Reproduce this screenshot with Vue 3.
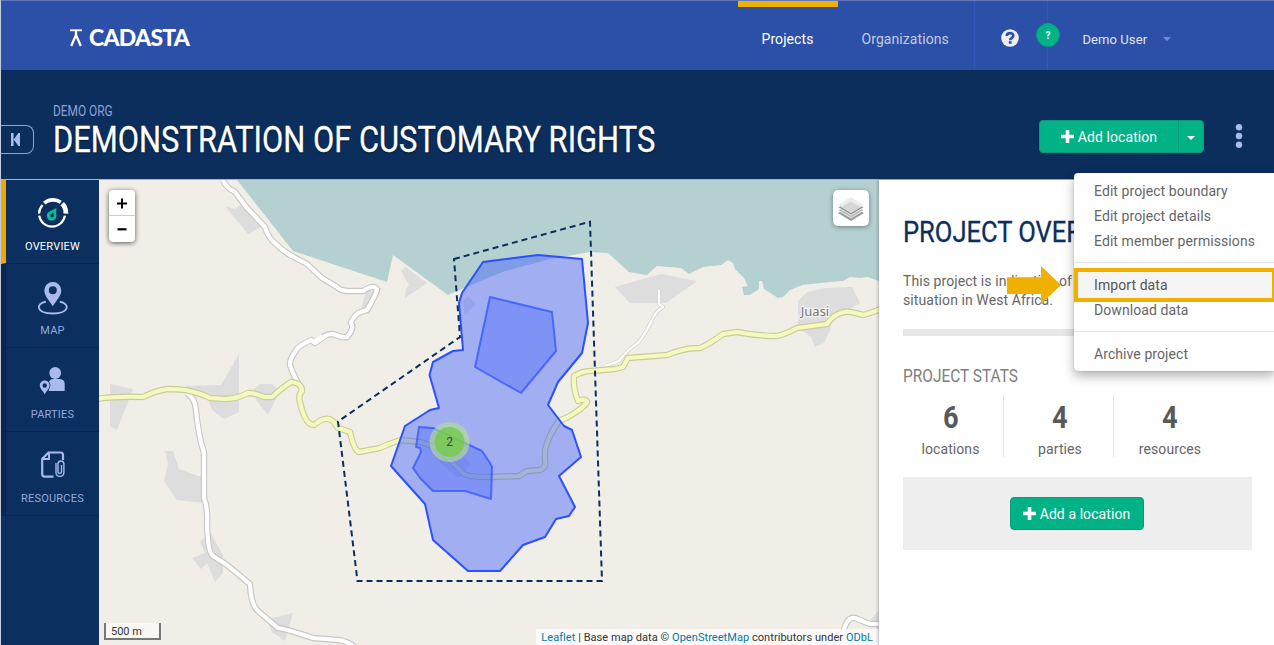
<script setup>
const navItems = [
  { label: 'Overview', icon: 'overview', active: true },
  { label: 'Map', icon: 'map' },
  { label: 'Parties', icon: 'parties' },
  { label: 'Resources', icon: 'resources' },
]
const stats = [
  { value: 6, label: 'locations' },
  { value: 4, label: 'parties' },
  { value: 4, label: 'resources' },
]
const menuGroups = [
  ['Edit project boundary', 'Edit project details', 'Edit member permissions'],
  ['Import data', 'Download data'],
  ['Archive project'],
]
const builtUp = [
  '225,206 235,209 240,205 250,216 261,227 248,234',
  '401,271 406,267 427,283 405,298 406,289 409,285',
  '367,288 382,288 369,314 360,313',
  '110,384 133,389 117,430 110,426',
  '185,386 221,385 239,354 239,412 224,419 212,410 208,400 195,396',
  '253,390 260,384 272,384 280,391 268,415 256,400',
  '165,451 173,451 179,469 204,478 204,503 177,500 164,481 168,464',
  '210,532 223,555 223,573 215,582 207,563 201,569 192,558 205,553 200,542',
  '267,619 293,613 285,641 272,632',
  '615,287 661,274 697,281 666,303 630,303',
  '798,301 807,292 825,288 852,287 860,303 832,318 830,330 824,343 815,347 811,337 798,328',
  '463,301 468,296 476,304 465,315',
  '437,460 460,452 471,464 458,478',
  '879,610 871,619 879,632',
]
const whiteRoads = [
  'M223 180Q226 188 235 192L247 208L265 227Q268 238 276 244Q284 252 292 256L307 264L322 278L337 287Q340 291 349 291L363 291Q373 284 377 289Q377 293 367 310L358 313Q350 321 351 323Q355 328 347 337Q342 338 333 334Q326 334 322 338L315 343L311 340Q299 346 297 349Q289 360 290 365Q292 372 299 385',
  'M187 393Q195 398 196 410Q198 434 204 453L204 498Q208 508 207 525Q208 553 213 556L227 565L250 584Q251 605 258 611L278 628Q286 629 313 638L338 640Q347 641 355 647',
  'M827 647Q835 637 843 633Q847 616 855 618L870 624L881 624',
]
const thinRoad = 'M605 366L619 361Q627 350 638 343Q645 335 654 316Q658 310 663 307L659 304L659 290'
const mainRoad =
  'M97 399Q116 396 143 397Q155 391 167 389Q180 389 190 391Q200 393 210 398L225 399Q236 399 248 393Q256 393 264 397L272 397Q283 387 291 382Q302 383 302 391Q298 395 300 402Q305 425 314 425Q326 415 333 421L338 428L350 432Q354 450 359 452L380 448Q390 443 401 440L420 442Q441 447 452 462L464 474Q468 477 490 477L519 476L527 471L540 470Q547 467 545 461L545 450Q549 434 559 421L568 417Q584 408 587 402Q586 398 578 401Q573 388 574 376Q583 371 591 371L615 369L623 367L628 358L667 355Q680 350 690 348.5L700 348Q708 345 723 334L737 332Q757 336 777 336Q786 334 797 328L827 324Q834 313 847 311.5Q857 313 863 315Q871 313 881 309'
</script>

<template>
  <div class="page">
    <header class="topbar">
      <div class="logo">
        <svg class="logo-mark" width="14" height="18" viewBox="0 0 14 18"><path d="M1 1.3H13" stroke="#fff" stroke-width="1.8" /><path d="M2.2 17L7 6L11.8 17M7 1V9" fill="none" stroke="#fff" stroke-width="2.3" /></svg>
        <span class="logo-text">CADASTA</span>
      </div>
      <nav class="topnav">
        <a class="current">Projects</a>
        <a>Organizations</a>
      </nav>
      <div class="help">
        <svg width="18" height="18" viewBox="0 0 18 18">
          <circle cx="9" cy="9" r="8.8" fill="#eeeef2" />
          <path d="M5.7 7C5.9 3.2 12.3 3.2 12.3 6.8C12.3 9 9.2 8.6 9.2 11.2" fill="none" stroke="#2c4fa7" stroke-width="2.6" />
          <rect x="7.8" y="12.2" width="2.8" height="2.5" fill="#2c4fa7" />
        </svg>
        <span class="badge">?</span>
      </div>
      <div class="user"><span>Demo User</span><i class="caret"></i></div>
    </header>

    <section class="titlebar">
      <button class="collapse">
        <svg width="10" height="13" viewBox="0 0 10 13"><path d="M0 0H2.6V13H0ZM9 0V13H7.4L2.7 6.5L7.4 0Z" fill="#a9bbec" /></svg>
      </button>
      <div class="heading">
        <div class="org">DEMO ORG</div>
        <h1>DEMONSTRATION OF CUSTOMARY RIGHTS</h1>
      </div>
      <div class="actions">
        <div class="split">
          <button class="green main"><svg width="13" height="13" viewBox="0 0 13 13"><path d="M4.7 0H8.3V4.7H13V8.3H8.3V13H4.7V8.3H0V4.7H4.7Z" fill="#fff" /></svg><span>Add location</span></button>
          <button class="green drop"><i class="caret white"></i></button>
        </div>
        <svg class="dots" width="8" height="24" viewBox="0 0 8 24"><circle v-for="y in [3.3, 12, 20.7]" :key="y" cx="4" :cy="y" r="3.2" fill="#a9bbec" /></svg>
      </div>
    </section>

    <main class="content">
      <aside class="sidebar">
        <div v-for="n in navItems" :key="n.label" class="side-item" :class="{ active: n.active }">
          <svg v-if="n.icon === 'overview'" width="34" height="34" viewBox="0 0 34 34">
            <g fill="none" stroke="#fff">
              <path d="M3.2 18.6A13 13 0 0 0 28.9 18.6" stroke-width="2.2" />
              <path d="M3 16.6A13 13 0 0 1 6.6 8" stroke-width="2.2" />
              <path d="M8.2 6.2A13.6 13.6 0 0 1 24.8 5.2" stroke-width="3.6" />
              <path d="M26.2 6.6A13.6 13.6 0 0 1 29.9 16.6" stroke-width="4.8" />
            </g>
            <path d="M20.4 11L13.6 14.6A4.7 4.7 0 1 0 20.3 19Z" fill="#14b898" />
            <path d="M17.2 15.2L15 17.5A1.7 1.7 0 1 0 17.8 18.5Z" fill="#0b2f5f" />
          </svg>
          <svg v-else-if="n.icon === 'map'" width="34" height="34" viewBox=".7 -.5 34 34">
            <path d="M10.5 20.3C0 22 .5 31.8 17.5 32C34.5 31.8 35 22 24.5 20.3" fill="none" stroke="#a9bbec" stroke-width="1.9" />
            <path fill-rule="evenodd" d="M17.5 24.8C15 20.5 9 14.5 9 9A8.5 8.5 0 0 1 26 9C26 14.5 20 20.5 17.5 24.8ZM17.5 4.8A4 4 0 1 0 17.5 12.8A4 4 0 1 0 17.5 4.8Z" fill="#a9bbec" />
          </svg>
          <svg v-else-if="n.icon === 'parties'" width="34" height="34" viewBox=".3 1 34 34">
            <circle cx="19.5" cy="9" r="5.9" fill="#a9bbec" />
            <path d="M13 27V20Q13 15 18 15H23Q29 15 29 20V27Z" fill="#a9bbec" />
            <path fill-rule="evenodd" d="M9 30.5C7.2 26.5 4 24.5 4 21.5A5 5 0 0 1 14 21.5C14 24.5 10.8 26.5 9 30.5ZM9 19.3A2.2 2.2 0 1 0 9 23.7A2.2 2.2 0 1 0 9 19.3Z" fill="#a9bbec" stroke="#0b2f5f" stroke-width="1.5" paint-order="stroke" />
          </svg>
          <svg v-else width="34" height="34" viewBox=".5 1 34 34" fill="none" stroke="#a9bbec">
            <path d="M27.5 12V7Q27.5 4.5 25 4.5H13L6.7 11V26Q6.7 28.6 9.2 28.6H18" stroke-width="2.2" />
            <path d="M13.5 5V11H7.5" stroke-width="1.9" />
            <path d="M20.5 15V25A4 4 0 0 0 28.4 25V15.5A3 3 0 0 0 22.5 15.5V24A1.8 1.8 0 0 0 26 24V17" stroke-width="1.4" />
          </svg>
          <span>{{ n.label }}</span>
        </div>
      </aside>

      <div class="map">
        <svg class="tiles" width="780" height="465" viewBox="99 180 780 465">
          <rect x="99" y="180" width="780" height="465" fill="#f1eee8" />
          <polygon fill="#b5d0d0" points="237,180 293,251 387,282 393,255 448,295 490,277 505,271 550,259 590,252 608,253 629,272 647,275 657,266 681,268 689,274 703,267 721,265 728,260 733,263 735,269 744,278 748,286 742,287 744,295 750,295 759,289 759,281 762,281 764,289 778,298 783,297 790,290 802,285 830,282 843,281 850,277 860,278 868,277 879,281 879,180" />
          <polygon v-for="p in builtUp" :key="p" :points="p" fill="#dddddd" />
          <g fill="none" stroke-linejoin="round">
            <path v-for="r in whiteRoads" :key="r" :d="r" stroke="#c8c6c4" stroke-width="6.4" />
            <path :d="thinRoad" stroke="#cfcdca" stroke-width="3.8" />
            <path v-for="r in whiteRoads" :key="'f' + r" :d="r" stroke="#fff" stroke-width="4.2" />
            <path :d="thinRoad" stroke="#fff" stroke-width="2.4" />
            <path d="M312 341L320 335L329 336L320 342Z" fill="#fff" />
            <path :d="mainRoad" stroke="#c9cc9c" stroke-width="6.4" />
            <path :d="mainRoad" stroke="#f6f9bd" stroke-width="4.2" />
          </g>
          <g fill="#3355ff" fill-opacity=".42" stroke="#2b50ff" stroke-width="2" stroke-linejoin="round">
            <polygon points="483,262 462,293 459,303 463,350 453,351 433,362 429.5,375 439,408 430,410 405,426 391,466 425,504 433,540 468,571 500,571 523,545 545,537 556,519 569,516 575,507 559,476 581,457 572,430 564,426 548,405 558,382 582,353 588,323 582,259 538,255" />
            <g fill-opacity=".3" stroke-opacity=".7">
              <polygon points="490,297 552,312 556,351 521,393 475,367" />
              <polygon points="419,427 433,428 482,451 490,463 492,467 491,499 465,491 433,491 420,478 413,468 421,452 420,448 416,447" />
            </g>
          </g>
          <polygon points="454,259 590,221.7 602,581 357.5,581 338,421.5 460,337" fill="none" stroke="#0b2e5d" stroke-width="2" stroke-dasharray="6 4" />
          <circle cx="449.6" cy="442" r="20" fill="#b5e28c" fill-opacity=".6" />
          <circle cx="449.6" cy="442" r="15" fill="#6ecc39" fill-opacity=".7" />
          <text class="cluster" x="449.6" y="446">2</text>
          <text class="place" x="815" y="316">Juasi</text>
        </svg>
        <div class="zoom"><span><svg width="12" height="12" viewBox="0 0 12 12"><path d="M1 6.5H11M6 1.5V11.5" stroke="#000" stroke-width="2" /></svg></span><span><svg width="12" height="12" viewBox="0 0 12 12"><path d="M1.5 6.3H10.5" stroke="#000" stroke-width="2.2" /></svg></span></div>
        <div class="layers">
          <svg width="28" height="28" viewBox="0 0 28 28">
            <path d="M14 10L27 18L14 26L1 18Z" fill="#9b9b9b" />
            <path d="M14 7.5L27 15.2L14 23L1 15.2Z" fill="#bdbdbd" stroke="#fff" stroke-width=".7" />
            <path d="M14 4.5L27 12.2L14 20L1 12.2Z" fill="#8f8f8f" stroke="#fff" stroke-width=".7" />
            <path d="M14 2L27 10L14 18L1 10Z" fill="#ececec" />
            <path d="M14 6.5L23.5 12L14 18L4.5 12Z" fill="#d6d6d6" />
          </svg>
        </div>
        <div class="scale">500 m</div>
        <div class="attribution"><a>Leaflet</a> | Base map data © <a>OpenStreetMap</a> contributors under <a>ODbL</a></div>
      </div>

      <section class="details">
        <h2>PROJECT OVERVIEW</h2>
        <p>This project is indicative of a customary<br />situation in West Africa.</p>
        <div class="progress"></div>
        <h3>PROJECT STATS</h3>
        <div class="stats">
          <div v-for="s in stats" :key="s.label" class="stat"><b>{{ s.value }}</b><span>{{ s.label }}</span></div>
        </div>
        <div class="cta">
          <button class="green add"><svg width="13" height="13" viewBox="0 0 13 13"><path d="M4.7 0H8.3V4.7H13V8.3H8.3V13H4.7V8.3H0V4.7H4.7Z" fill="#fff" /></svg><span>Add a location</span></button>
        </div>
      </section>
    </main>

    <div class="menu">
      <ul v-for="(group, i) in menuGroups" :key="i">
        <li v-for="item in group" :key="item" :class="{ highlighted: item === 'Import data' }">{{ item }}</li>
      </ul>
    </div>
    <svg class="pointer" width="54" height="38" viewBox="0 0 54 38"><path d="M0 11.3H34V0L54 19L34 38V28H0Z" fill="#f0b000" /></svg>
  </div>
</template>

<style>
body { margin: 0; overflow: hidden; }
</style>

<style scoped>
* { box-sizing: border-box; }
.page { position: relative; width: 1274px; height: 645px; overflow: hidden; display: flex; flex-direction: column; background: #fff; font-family: Roboto, "Liberation Sans", sans-serif; font-size: 14px; letter-spacing: .08px; color: #666; border-left: 1px solid #c3cbdc; }
button { font: inherit; letter-spacing: inherit; padding: 0; }
.topbar { flex: none; height: 70px; display: flex; background: #2c4fa7; border-top: 1px solid #6379bb; color: #e1e4ee; }
.logo { width: 737px; flex: none; display: flex; padding: 27px 0 0 68px; }
.logo-mark { margin-top: 1px; }
.logo-text { font: 900 23px/23px Lato, sans-serif; letter-spacing: -.75px; color: #fff; margin: -2px 0 0 6px; }
.topnav { width: 236px; flex: none; display: flex; }
.topnav a { padding-left: 23.5px; width: 100px; line-height: 77px; color: #c6cce0; }
.topnav .current { color: #fff; border-top: 6px solid #f0b000; line-height: 65px; }
.help { position: relative; width: 74px; flex: none; border: solid #3157b8; border-width: 0 1px; padding: 28px 0 0 26px; }
.badge { position: absolute; left: 61px; top: 22px; width: 24px; height: 24px; border-radius: 50%; background: #00b286; border: 1px solid #079b83; color: #fff; font: 700 10px/23px Roboto, sans-serif; letter-spacing: 0; text-align: center; }
.user { display: flex; align-items: center; padding: 7px 0 0 34.5px; gap: 16px; font-size: 13px; }
.caret { border: solid transparent; border-width: 4px 4px 0; border-top-color: #6d8cdd; }
.caret.white { border-top-color: #fff; margin-top: 2px; }
.titlebar { flex: none; height: 110px; display: flex; background: #0b2e5d; border-bottom: 1px solid #a9b4cb; }
.collapse { width: 33px; height: 29px; margin-top: 55px; background: none; border: 1px solid #8ea2d6; border-left: 0; border-radius: 0 8px 8px 0; display: flex; align-items: center; padding-left: 10px; }
.heading { margin-left: 19px; width: 986px; padding-top: 33px; }
.org { font-size: 14px; line-height: 16px; letter-spacing: 0; color: #8ea0d8; transform: scaleX(.85); transform-origin: 0 0; white-space: nowrap; }
h1 { margin: 0; font-size: 37px; font-weight: 400; line-height: 42px; letter-spacing: 0; color: #fff; transform: scaleX(.835); transform-origin: 0 0; white-space: nowrap; text-shadow: 0 1px 2px rgba(0,0,0,.5); -webkit-text-stroke: .3px #fff; }
.actions { display: flex; align-items: flex-start; padding-top: 50px; }
.split { display: flex; width: 165px; }
.green { display: flex; align-items: center; justify-content: center; gap: 4px; height: 33px; background: #00b286; border: 1px solid #089a79; color: #fff; }
.green span { position: relative; top: .5px; }
.main { width: 140px; border-radius: 4px 0 0 4px; }
.drop { width: 26px; margin-left: -1px; border-radius: 0 4px 4px 0; }
.dots { margin: 4px 0 0 31px; }
.content { flex: 1; display: flex; min-height: 0; }
.sidebar { width: 98px; flex: none; background: #0b2f5f; }
.side-item { height: 84px; border-left: 5px solid #0a264d; border-bottom: 1px solid #092650; display: flex; flex-direction: column; align-items: center; padding: 17px 0 0; color: #94a9dd; font-size: 11px; letter-spacing: .2px; text-transform: uppercase; }
.side-item span { line-height: 14px; margin-top: 9px; }
.active { border-left-color: #f0a800; color: #fff; }
.map { position: relative; width: 780px; flex: none; overflow: hidden; }
.tiles { display: block; }
.cluster { font: 12px Roboto, sans-serif; letter-spacing: 0; fill: #444; text-anchor: middle; }
.place { font: 13px "Noto Sans", sans-serif; letter-spacing: 0; fill: #777; text-anchor: middle; stroke: #f4f3f1; stroke-width: 2.5px; paint-order: stroke; }
.zoom { position: absolute; left: 10px; top: 10px; width: 26px; height: 52px; border-radius: 4px; background: #fff; box-shadow: 0 1px 5px rgba(0,0,0,.65); }
.zoom span { display: flex; height: 26px; align-items: center; justify-content: center; }
.zoom span + span { border-top: 1px solid #ccc; margin-top: -1px; }
.layers { position: absolute; right: 10px; top: 10px; width: 36px; height: 36px; border-radius: 5px; background: #fff; box-shadow: 0 1px 5px rgba(0,0,0,.4); padding: 5px 4px; }
.scale { position: absolute; left: 5px; bottom: 5px; width: 57px; height: 17px; border: 2px solid #777; border-top: 0; background: rgba(255,255,255,.5); padding-left: 5px; font-size: 11px; line-height: 17px; letter-spacing: 0; color: #333; }
.attribution { position: absolute; right: 0; bottom: 0; height: 16px; padding: 0 6px 0 5px; background: rgba(255,255,255,.7); font-size: 11px; line-height: 17px; letter-spacing: .055px; color: #333; white-space: nowrap; }
.attribution a { color: #0078a8; }
.details { flex: 1; padding: 35px 22px 0 24px; box-shadow: -1px 0 3px rgba(0,0,0,.25); position: relative; background: #fff; overflow: hidden; }
h2 { margin: 0; font-size: 29px; font-weight: 400; line-height: 34px; letter-spacing: 0; color: #0b2e5d; transform: scaleX(.88); transform-origin: 0 0; white-space: nowrap; -webkit-text-stroke: .3px #0b2e5d; }
p { margin: 23px 0 0; line-height: 19px; white-space: nowrap; }
.progress { height: 7px; background: #e6e7e8; margin-top: 19px; }
h3 { margin: 29px 0 0; font-size: 18px; font-weight: 400; line-height: 22px; letter-spacing: 0; color: #808080; transform: scaleX(.858); transform-origin: 0 0; }
.stats { display: flex; width: 324px; margin-top: 8px; }
.stat { flex: none; width: 110px; height: 62px; display: flex; flex-direction: column; align-items: center; border-right: 1px solid #e4e4e4; }
.stat:first-child { width: 101px; padding-right: 5px; }
.stat:nth-child(2) { padding-left: 3px; }
.stat:last-child { border: 0; width: 112px; }
.stat b { font-size: 31px; line-height: 36px; letter-spacing: 0; color: #58595b; transform: scaleX(.88); margin-top: 5px; }
.stat span { line-height: 18px; margin-top: 4px; }
.cta { height: 73px; margin-top: 20px; background: #eee; display: flex; justify-content: center; align-items: center; padding-right: 2px; }
.add { width: 134px; border-radius: 4px; }
.menu { position: absolute; left: 1073px; top: 173px; width: 201px; height: 198px; background: #fff; border-radius: 4px 0 0 4px; box-shadow: 0 5px 12px rgba(0,0,0,.3), 0 0 1px rgba(0,0,0,.5); padding-top: 6px; }
ul { list-style: none; margin: 0; padding: 0; }
ul + ul { border-top: 1px solid #e5e5e5; margin-top: 8px; padding-top: 10px; }
li { height: 25px; line-height: 25px; padding-left: 20px; white-space: nowrap; }
.highlighted { position: relative; height: 34px; margin: -5px 0 -4px; line-height: 27px; border: 4px solid #f0b000; border-right-width: 3px; padding-left: 16px; background: #f5f5f5; color: #555; }
.pointer { position: absolute; left: 1006px; top: 266px; }
</style>
